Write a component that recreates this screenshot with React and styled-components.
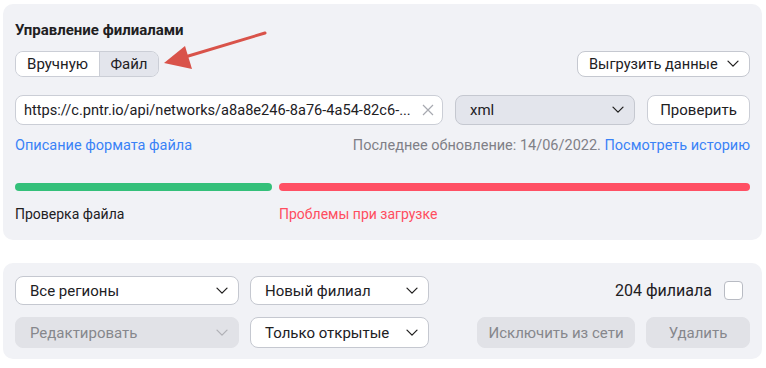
import React from "react";
import styled, { createGlobalStyle } from "styled-components";

const GlobalStyle = createGlobalStyle`
  body {
    margin: 0;
    background: #ffffff;
    font-family: Roboto, "Liberation Sans", Arial, sans-serif;
    color: #21201f;
  }
`;

const Page = styled.div`
  width: 766px;
  height: 368px;
  box-sizing: border-box;
  padding: 4px 4px 0 3px;
  display: flex;
  flex-direction: column;
  gap: 23px;
  position: relative;
`;

const Panel = styled.section`
  background: #f1f2f6;
  border-radius: 10px;
  padding: ${(p) => p.$pad};
  display: flex;
  flex-direction: column;
`;

const Title = styled.h2`
  margin: 0;
  font-size: 15px;
  font-weight: 700;
  line-height: 20px;
`;

const Row = styled.div`
  display: flex;
  align-items: center;
  justify-content: space-between;
  gap: 12px;
  margin-top: ${(p) => p.$mt || 0}px;
`;

const Segmented = styled.div`
  display: flex;
  height: 26px;
  border: 1px solid #cbced6;
  border-radius: 8px;
  overflow: hidden;
  box-sizing: border-box;
`;

const Segment = styled.button`
  border: none;
  border-right: ${(p) => (p.$last ? "none" : "1px solid #cbced6")};
  background: ${(p) => (p.$active ? "#e3e5ec" : "#ffffff")};
  font: inherit;
  font-size: 15px;
  color: #21201f;
  width: ${(p) => p.$w}px;
  padding: 0;
  cursor: pointer;
`;

const Button = styled.button`
  height: ${(p) => p.$h || 30}px;
  width: ${(p) => (p.$w ? `${p.$w}px` : "auto")};
  box-sizing: border-box;
  border: 1px solid ${(p) => (p.$disabled ? "#e1e2e7" : "#cbced6")};
  border-radius: 8px;
  background: ${(p) => (p.$disabled ? "#e1e2e7" : "#ffffff")};
  color: ${(p) => (p.$disabled ? "#86878c" : "#21201f")};
  font: inherit;
  font-size: ${(p) => p.$fs || 15}px;
  white-space: nowrap;
  padding: 0 ${(p) => p.$px || 12}px;
  display: flex;
  align-items: center;
  justify-content: ${(p) => (p.$center ? "center" : "space-between")};
  gap: 8px;
  cursor: pointer;
  flex-shrink: 0;

  svg {
    flex-shrink: 0;
  }
`;

const Select = styled(Button)`
  background: ${(p) => (p.$disabled ? "#e1e2e7" : p.$grey ? "#e3e5ec" : "#ffffff")};
  border-color: ${(p) => (p.$disabled ? "#e1e2e7" : "#c5c8d0")};
  padding: 0 ${(p) => p.$pr || 10}px 0 ${(p) => p.$pl || 14}px;
`;

const InputBox = styled.div`
  flex: 1;
  height: 30px;
  box-sizing: border-box;
  border: 1px solid #cbced6;
  border-radius: 8px;
  background: #ffffff;
  display: flex;
  align-items: center;
  padding: 0 8px 0 8px;
  gap: 8px;
  min-width: 0;
`;

const InputText = styled.span`
  flex: 1;
  font-size: 14.6px;
  white-space: nowrap;
`;

const Link = styled.a`
  color: #3a82f7;
  text-decoration: none;
  cursor: pointer;
`;

const InfoRow = styled.div`
  display: flex;
  justify-content: space-between;
  font-size: 14.5px;
  line-height: 18px;
  margin-top: 12px;
`;

const Muted = styled.span`
  color: #7f8087;
`;

const Progress = styled.div`
  display: grid;
  grid-template-columns: 257px 1fr;
  column-gap: 7px;
  row-gap: 14px;
  margin-top: 28px;
`;

const Bar = styled.div`
  height: 8px;
  border-radius: 4px;
  background: ${(p) => p.$color};
`;

const StepLabel = styled.div`
  font-size: 14px;
  line-height: 18px;
  color: ${(p) => p.$color || "#21201f"};
`;

const Filters = styled.div`
  display: grid;
  grid-template-columns: 224px 179px 1fr;
  column-gap: 11px;
  row-gap: 12px;
  align-items: center;
`;

const RightGroup = styled.div`
  display: flex;
  justify-content: flex-end;
  align-items: center;
  gap: 11px;
`;

const Count = styled.span`
  font-size: 16px;
  margin-right: 1px;
`;

const Checkbox = styled.span`
  width: 19px;
  height: 19px;
  box-sizing: border-box;
  border: 1px solid #b8bbc3;
  border-radius: 4px;
  background: #ffffff;
  margin-right: 7px;
`;

const ArrowOverlay = styled.svg`
  position: absolute;
  left: 155px;
  top: 24px;
  pointer-events: none;
`;

const Chevron = ({ color = "#21201f", size = 12 }) => (
  <svg width={size} height={size * 0.6} viewBox="0 0 12 7" fill="none">
    <polyline points="1,1 6,6 11,1" stroke={color} strokeWidth="1.3" strokeLinecap="round" strokeLinejoin="round" />
  </svg>
);

const Cross = () => (
  <svg width="12" height="12" viewBox="0 0 12 12" fill="none">
    <path d="M1 1L11 11M11 1L1 11" stroke="#a7a9b0" strokeWidth="1.2" />
  </svg>
);

export default function App() {
  return (
    <>
      <GlobalStyle />
      <Page>
        <Panel $pad="16px 12px 17px 12px">
          <Title>Управление филиалами</Title>
          <Row $mt={11}>
            <Segmented>
              <Segment $w={84}>Вручную</Segment>
              <Segment $w={58} $active $last>Файл</Segment>
            </Segmented>
            <Select $h={26} $w={173} $pl={11} $fs={14.6}>
              Выгрузить данные <Chevron />
            </Select>
          </Row>
          <Row $mt={18}>
            <InputBox>
              <InputText>https://c.pntr.io/api/networks/a8a8e246-8a76-4a54-82c6-...</InputText>
              <Cross />
            </InputBox>
            <Select $grey $w={180}>
              xml <Chevron />
            </Select>
            <Button $w={103} $center>Проверить</Button>
          </Row>
          <InfoRow>
            <Link>Описание формата файла</Link>
            <span>
              <Muted>Последнее обновление: 14/06/2022. </Muted>
              <Link>Посмотреть историю</Link>
            </span>
          </InfoRow>
          <Progress>
            <Bar $color="#34c07a" />
            <Bar $color="#ff5064" />
            <StepLabel>Проверка файла</StepLabel>
            <StepLabel $color="#ff4d5e">Проблемы при загрузке</StepLabel>
          </Progress>
        </Panel>

        <Panel $pad="13px 12px 11px 12px">
          <Filters>
            <Select $h={29}>
              Все регионы <Chevron />
            </Select>
            <Select $h={29}>
              Новый филиал <Chevron />
            </Select>
            <RightGroup>
              <Count>204 филиала</Count>
              <Checkbox />
            </RightGroup>
            <Select $h={31} $disabled>
              Редактировать <Chevron color="#b0b1b6" />
            </Select>
            <Select $h={31}>
              Только открытые <Chevron />
            </Select>
            <RightGroup>
              <Button $h={31} $w={158} $disabled $center>Исключить из сети</Button>
              <Button $h={31} $w={104} $disabled $center>Удалить</Button>
            </RightGroup>
          </Filters>
        </Panel>

        <ArrowOverlay width="120" height="50" viewBox="0 0 120 50">
          <path d="M110 9 L30 33" stroke="#d9534a" strokeWidth="3" strokeLinecap="round" />
          <path d="M9 39 L30 22 L37 45 Z" fill="#d9534a" />
        </ArrowOverlay>
      </Page>
    </>
  );
}
